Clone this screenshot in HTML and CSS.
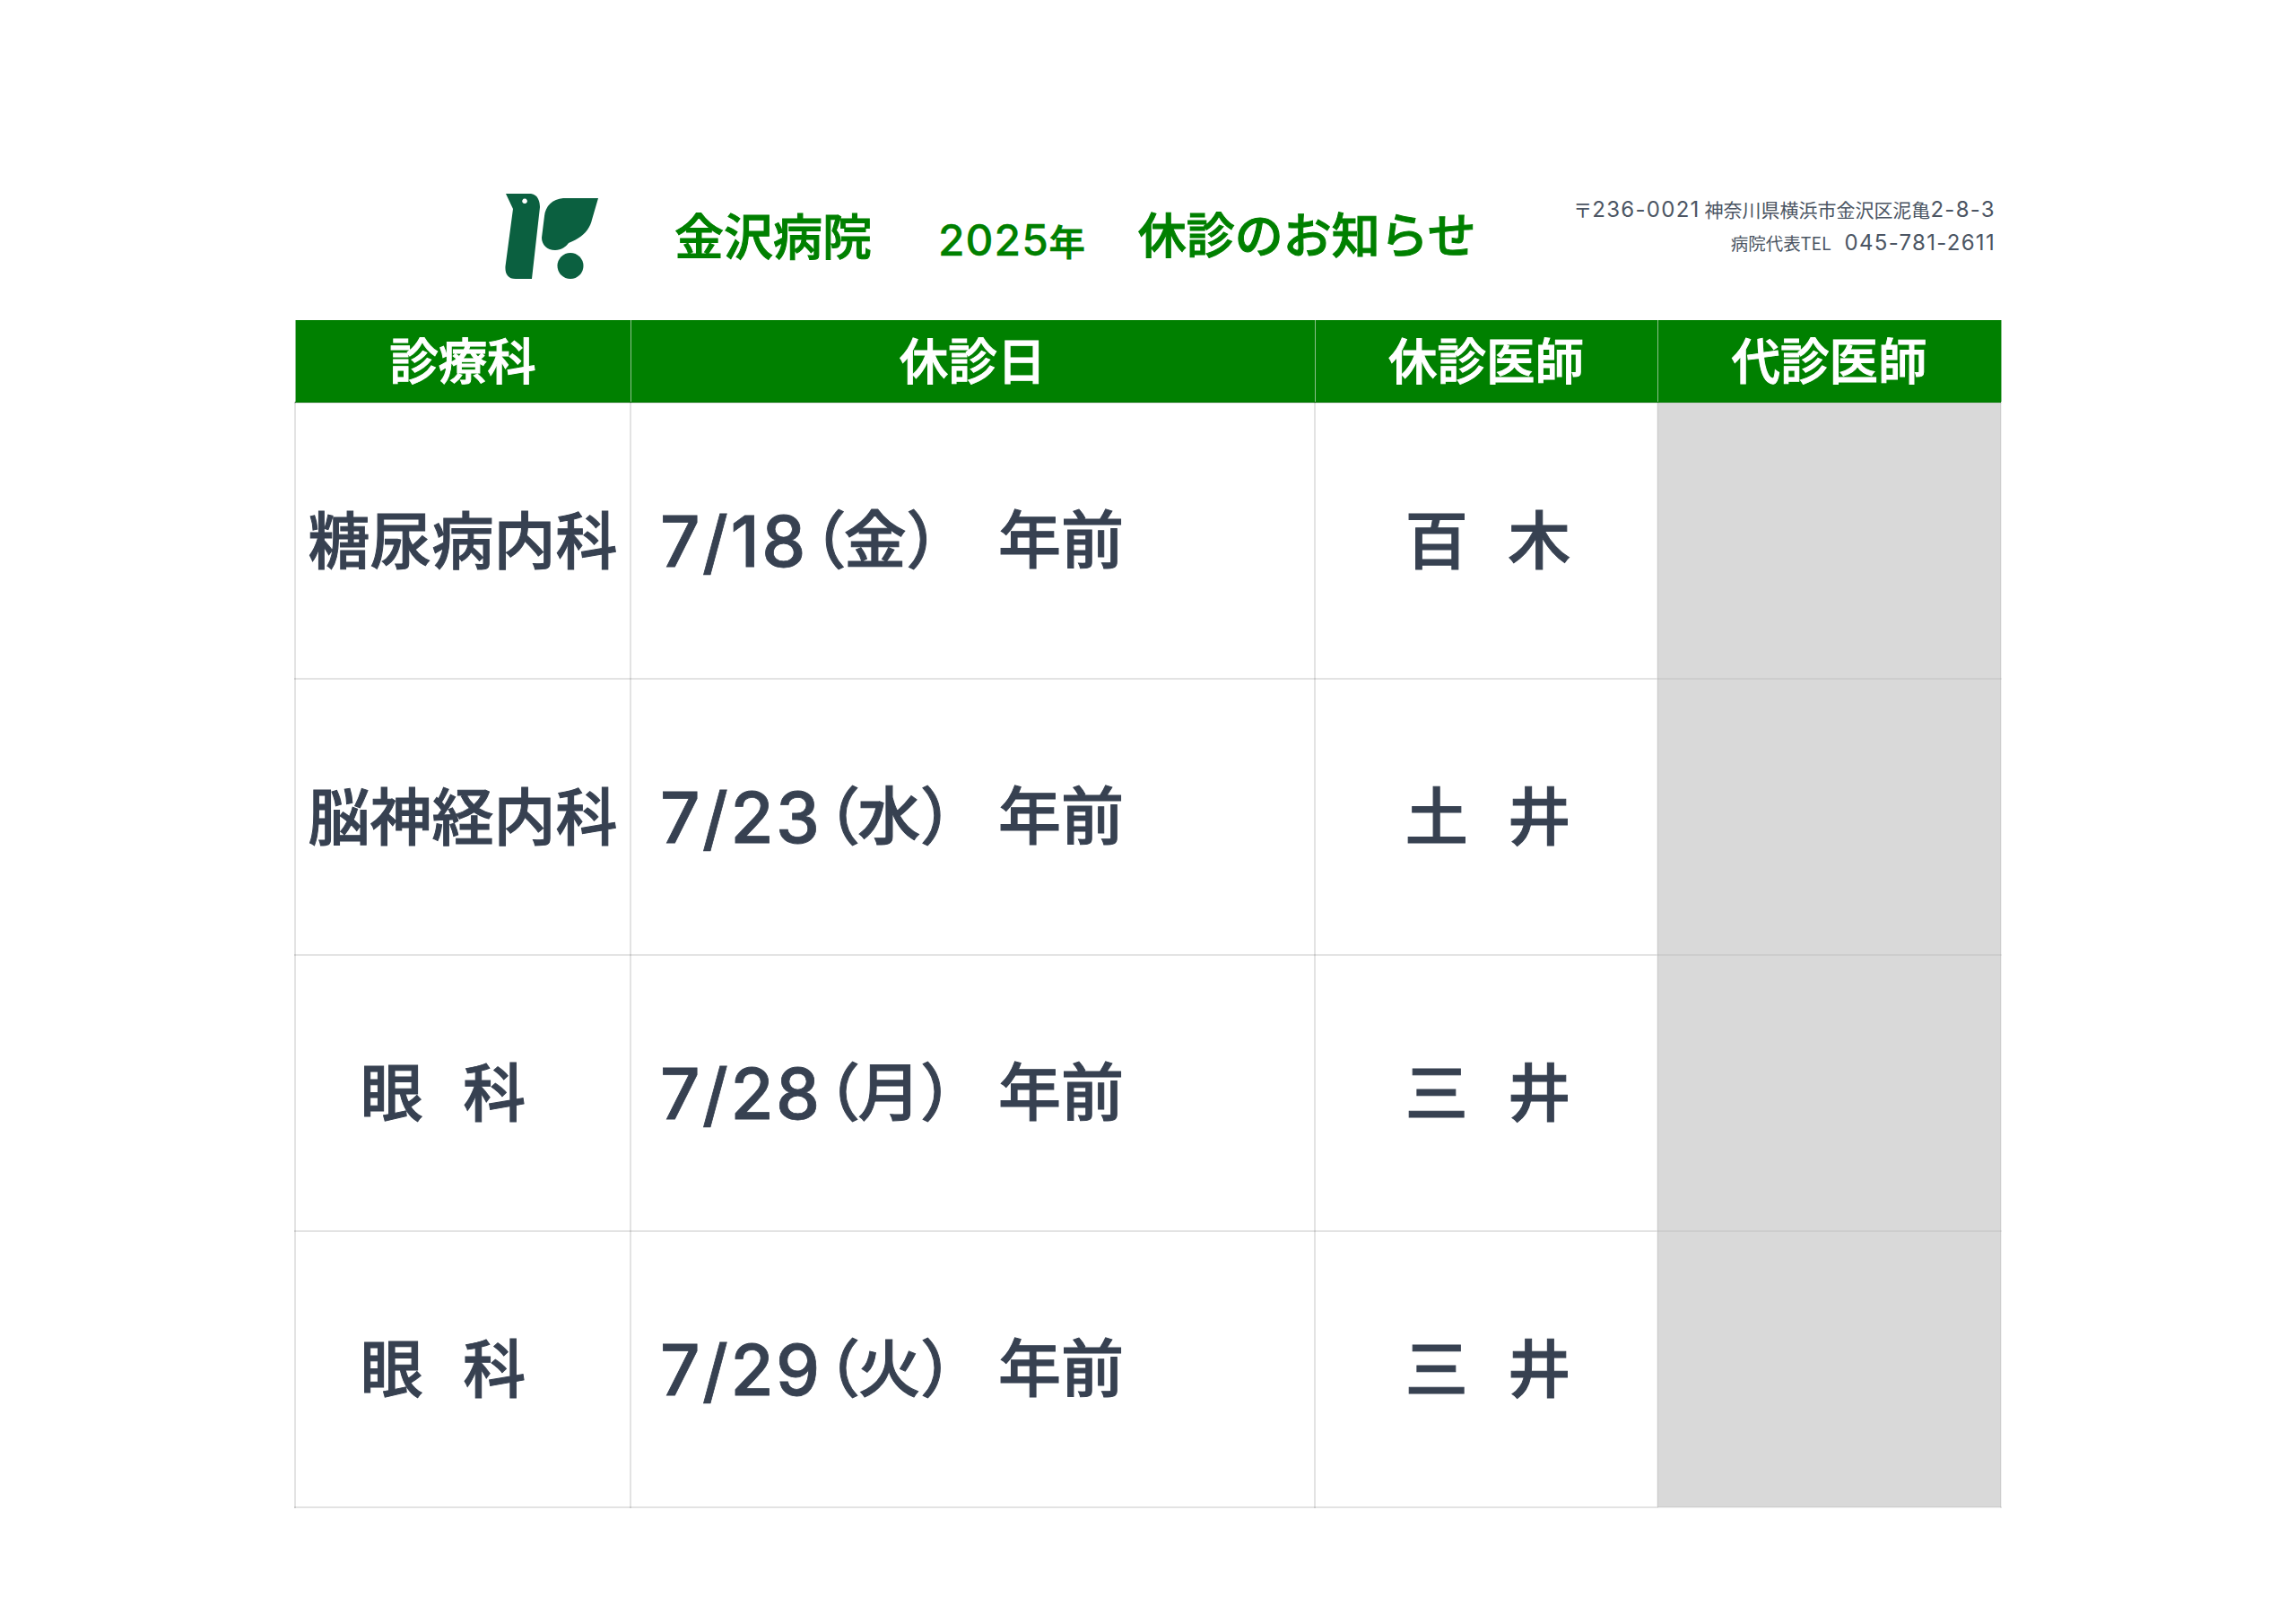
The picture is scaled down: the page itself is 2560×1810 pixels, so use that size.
FILE: index.html
```html
<!DOCTYPE html>
<html lang="ja">
<head>
<meta charset="utf-8">
<title>金沢病院 休診のお知らせ</title>
<link rel="stylesheet" href="styles.css">
</head>
<body>
<main class="sheet">
  <header class="head">
    <svg class="logo" viewBox="0 0 110 100" aria-hidden="true">
      <path class="mark" fill-rule="evenodd" d="M2 1 H30 C38 2 40 10 40 16 L31 96 H13 C4 96 1 90 1.500 82 L10 18 Z M23 6.500 A2.800 2.800 0 1 0 23.100 6.500 Z"/>
      <path class="mark" d="M105 6 H66 C54 7 46 15 45 26 L42 50 C42 58 48 64 57 64 C64 64 69 60 72 56 C88 50 96 40 98 30 Z"/>
      <circle class="mark" cx="74" cy="81.500" r="14.500"/>
    </svg>
    <h1 class="title">
      <span class="title-name">金沢病院</span>
      <span class="title-year"><span class="title-num">2025</span>年</span>
      <span class="title-text">休診のお知らせ</span>
    </h1>
    <address class="contact">
      <div class="contact-line">〒<span class="ltn">236-0021</span> 神奈川県横浜市金沢区泥亀<span class="ltn">2-8-3</span></div>
      <div class="contact-line"><small class="contact-label">病院代表TEL</small><span class="ltn">045-781-2611</span></div>
    </address>
  </header>
  <table class="closures">
    <colgroup>
      <col class="col-dept"><col class="col-date"><col class="col-doc"><col class="col-sub">
    </colgroup>
    <thead>
      <tr><th>診療科</th><th>休診日</th><th>休診医師</th><th>代診医師</th></tr>
    </thead>
    <tbody>
      <tr><td class="dept long">糖尿病内科</td><td class="date"><span class="when"><span class="num">7/18</span><span class="par">（</span>金<span class="par par-end">）</span></span>年前</td><td class="doc">百 木</td><td class="sub"></td></tr>
      <tr><td class="dept long">脳神経内科</td><td class="date"><span class="when"><span class="num">7/23</span><span class="par">（</span>水<span class="par par-end">）</span></span>年前</td><td class="doc">土 井</td><td class="sub"></td></tr>
      <tr><td class="dept short">眼 科</td><td class="date"><span class="when"><span class="num">7/28</span><span class="par">（</span>月<span class="par par-end">）</span></span>年前</td><td class="doc">三 井</td><td class="sub"></td></tr>
      <tr><td class="dept short">眼 科</td><td class="date"><span class="when"><span class="num">7/29</span><span class="par">（</span>火<span class="par par-end">）</span></span>年前</td><td class="doc">三 井</td><td class="sub"></td></tr>
    </tbody>
  </table>
</main>
</body>
</html>
```
FILE: styles.css
```css
html, body { margin: 0; padding: 0; background: #fff; }
body { font-family: "Noto Sans CJK JP", sans-serif; color: #374151; }
.sheet { width: 1902px; margin: 0 0 0 328px; padding-top: 215px; }
.head { display: flex; align-items: flex-start; height: 142px; }
.logo { width: 110px; height: 100px; margin-left: 234px; flex: none; }
.mark { fill: #0b6040; }
.title { display: flex; align-items: center; margin: 2px 0 0 0; padding-left: 80px; font-size: 55px; font-weight: 500; -webkit-text-stroke: 1px #008000; color: #008000; line-height: 70px; flex: none; white-space: nowrap; }
.title-year { font-size: 40px; margin: 16px 0 0 74px; }
.title-num { font-family: "Inter", sans-serif; font-size: 48px; letter-spacing: 1px; -webkit-text-stroke: .3px #008000; }
.title-text { margin-left: 59px; font-size: 54px; }
.contact { margin-left: auto; padding-right: 5px; font-style: normal; text-align: right; font-size: 21px; line-height: 36px; color: #4b5563; white-space: nowrap; margin-top: 0; }
.ltn { font-family: "Inter", sans-serif; font-size: 24px; letter-spacing: 1.300px; }
.contact-label { font-size: 19.500px; margin-right: 15px; }
.closures { width: 1902px; border-collapse: collapse; table-layout: fixed; }
.col-dept { width: 374px; }
.col-date { width: 763px; }
.col-doc { width: 382px; }
.col-sub { width: 383px; }
th { height: 87px; padding: 0 0 4px; box-sizing: content-box; background: #008000; color: #fff; font-size: 54.500px; font-weight: 500; -webkit-text-stroke: 1px #fff; text-align: center; border-left: 1px solid #8dc08d; border-right: 1px solid #8dc08d; line-height: 1; }
td { height: 308px; padding: 0 0 8px; box-sizing: border-box; border: 2px solid rgba(0, 0, 0, .11); font-size: 70px; font-weight: 500; -webkit-text-stroke: 1px #374151; line-height: 1; text-align: center; white-space: nowrap; word-spacing: 29px; }
.long { font-size: 69px; }
.date { text-align: left; padding: 0 0 0 32px; }
.when { display: inline-block; width: 377px; }
.num { font-family: "Inter", sans-serif; font-size: 78px; letter-spacing: 2.500px; vertical-align: -4px; -webkit-text-stroke: .8px #374151; }
.par { font-feature-settings: "palt"; margin: 0 0 0 5px; }
.par-end { margin-left: 2px; }
.short { padding-right: 44px; }
.doc { padding-left: 4px; border-right: none; }
.sub { background: #d9d9d9; border-color: rgba(0, 0, 0, .05); }
```
